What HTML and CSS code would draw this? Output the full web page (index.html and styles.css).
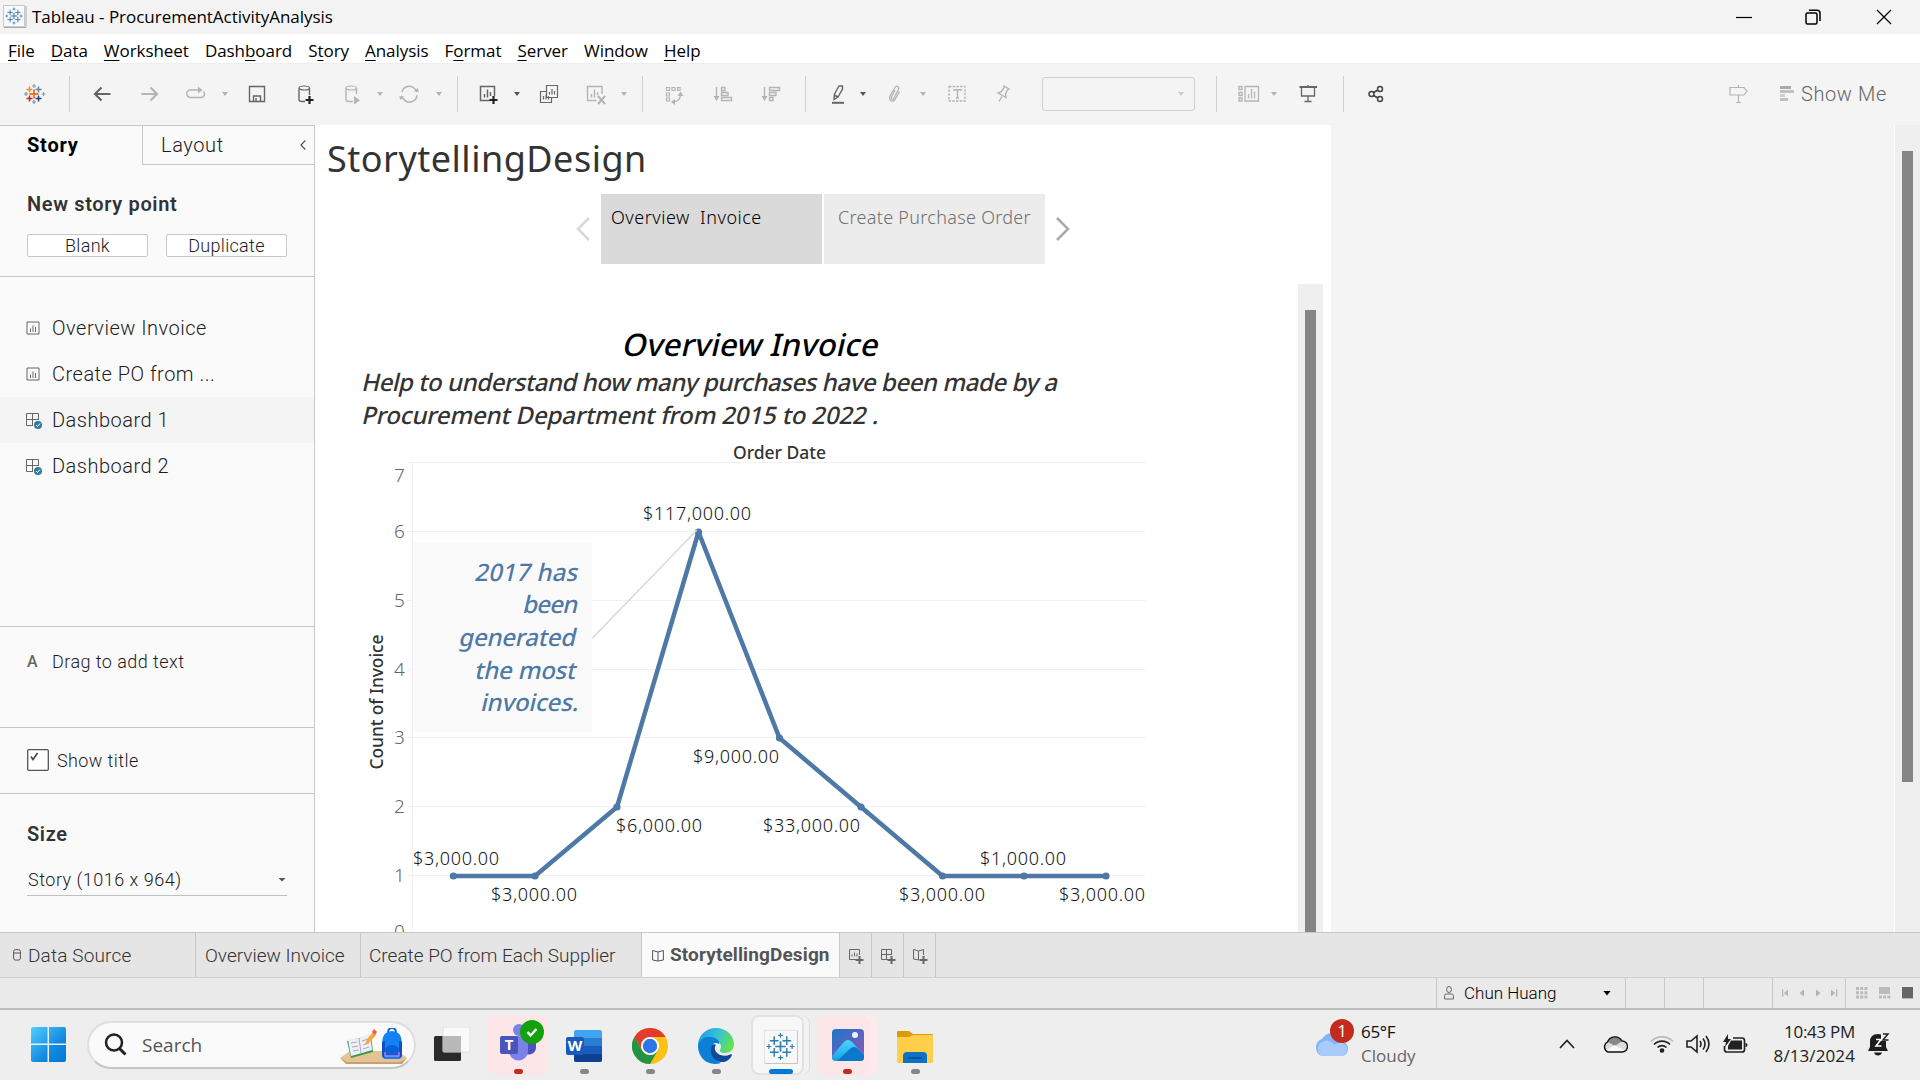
FILE: index.html
```html
<!DOCTYPE html>
<html lang="en">
<head>
<meta charset="utf-8">
<title>Tableau - ProcurementActivityAnalysis</title>
<link rel="stylesheet" href="styles.css">
</head>
<body>
<svg class="defs" width="0" height="0" aria-hidden="true">
  <symbol id="tableau" viewBox="0 0 30 30">
    <path d="M15 9.500v11M9.500 15h11" stroke-width="1.700"/>
    <path d="M8.500 4.500v9M4 9h9M21.500 4.500v9M17 9h9M8.500 16.500v9M4 21h9M21.500 16.500v9M17 21h9" stroke-width="1.500"/>
    <path d="M15 1v5M12.500 3.500h5M15 24v5M12.500 26.500h5M3 12.500v5M.5 15h5M27 12.500v5M24.500 15h5" stroke-width="1.200"/>
  </symbol>
  <symbol id="sheet" viewBox="0 0 14 14"><path d="M1 1h12v12H1zM4.500 7.500v3.500M7 4.500V11M9.500 6v5"/></symbol>
  <symbol id="dash" viewBox="0 0 18 18"><path d="M8 14.500H1.500v-12h12V9M1.500 8.500h12M7.500 2.500v12"/><circle cx="13" cy="14" r="4" fill="#2e7ba0" stroke="none"/><path d="M11 14l1.500 1.500 2.500-3" stroke="#fff"/></symbol>
</svg>

<header class="titlebar">
  <svg class="app-icon" width="24" height="24" viewBox="0 0 24 24"><rect x=".5" y=".5" width="21" height="21" fill="#f7f9fa" stroke="#c9c9c9"/><path d="M1 22.500h22V1" fill="none" stroke="#aaa"/><use href="#tableau" x="2" y="2" width="18" height="18" stroke="#2f7cab"/></svg>
  <span class="app-title">Tableau - ProcurementActivityAnalysis</span>
  <div class="win-controls">
    <svg width="16" height="16" viewBox="0 0 16 16"><path d="M0 8.500h16" stroke="#000" stroke-width="1.200"/></svg>
    <svg width="16" height="16" viewBox="0 0 16 16" fill="none" stroke="#000" stroke-width="1.500"><rect x="1" y="4" width="11" height="11" rx="1.500"/><path d="M4 1.200h8a3 3 0 0 1 3 3V12"/></svg>
    <svg width="16" height="16" viewBox="0 0 16 16" stroke="#000" stroke-width="1.300"><path d="M1 1l14 14M15 1L1 15"/></svg>
  </div>
</header>

<nav class="menubar">
  <span><u>F</u>ile</span><span><u>D</u>ata</span><span><u>W</u>orksheet</span><span>Dash<u>b</u>oard</span><span>S<u>t</u>ory</span><span><u>A</u>nalysis</span><span>F<u>o</u>rmat</span><span><u>S</u>erver</span><span>Wi<u>n</u>dow</span><span><u>H</u>elp</span>
</nav>

<div class="toolbar">
  <svg class="ic" viewBox="0 0 24 24"><g fill="none"><path d="M12 7.500v9M7.500 12h9" stroke="#e8762c" stroke-width="1.800"/><path d="M7.500 4.500v6M4.500 7.500h6" stroke="#eb912c" stroke-width="1.500"/><path d="M16.500 4.500v6M13.500 7.500h6" stroke="#5c8a9c" stroke-width="1.500"/><path d="M7.500 13.500v6M4.500 16.500h6" stroke="#c72035" stroke-width="1.500"/><path d="M16.500 13.500v6M13.500 16.500h6" stroke="#1f447e" stroke-width="1.500"/><path d="M12 2v4M10 4h4M19.500 12h4M21.500 10v4" stroke="#7aa6b8"/><path d="M12 18v4M10 20h4M2 12h4M4 10v4" stroke="#7199a6"/></g></svg>
  <i class="sep"></i>
  <svg class="ic dark bold" viewBox="0 0 24 24"><path d="M20.500 12H5M11.500 5.500L5 12l6.500 6.500"/></svg>
  <svg class="ic bold" viewBox="0 0 24 24"><path d="M3.500 12H19M12.500 5.500L19 12l-6.500 6.500"/></svg>
  <svg class="ic" viewBox="0 0 24 24"><path d="M15 8H6.500a3.500 3.500 0 0 0 0 7.500h10.500a3.500 3.500 0 0 0 2.500-6" stroke-width="1.500"/><path d="M14 4.500L18.500 8 14 11.500z" fill="currentColor" stroke="none"/></svg>
  <i class="caret"></i>
  <svg class="ic dark" viewBox="0 0 24 24"><path d="M4.500 4.500h15v15h-15zM8.500 19v-5h7v5M11 19v-3" stroke-width="1.400"/></svg>
  <svg class="ic dark" viewBox="0 0 24 24"><path d="M12 19.500H9c-2.500 0-3-1-3-2V6.500M16.500 6.500V13" stroke-width="1.400"/><ellipse cx="11.250" cy="6" rx="5.250" ry="2"/><path d="M16.500 14v8M12.500 18h8" stroke="#222" stroke-width="2.200"/></svg>
  <svg class="ic" viewBox="0 0 24 24"><path d="M13 19.500H9c-2.500 0-3-1-3-2V6.500M16.500 6.500V12" stroke-width="1.400"/><ellipse cx="11.250" cy="6" rx="5.250" ry="2"/><path d="M14 14l6 4.500-6 4z" fill="currentColor" stroke="none"/></svg>
  <i class="caret"></i>
  <svg class="ic" viewBox="0 0 24 24"><path d="M5 10a7.500 7.500 0 0 1 13-3l2 3M20 13a7.500 7.500 0 0 1-13.500 4L4 14" stroke-width="1.500"/><path d="M17 9.500h5L20.500 6zM2 14.500h5L3.500 18z" fill="currentColor" stroke="none"/></svg>
  <i class="caret"></i>
  <i class="sep"></i>
  <svg class="ic dark" viewBox="0 0 24 24"><path d="M14 18.500H4.500v-14h14V14M8.500 15.500V12M11.500 15.500v-8M14.500 14v-4" stroke-width="1.500"/><path d="M17.500 14v8M13.500 18h8" stroke="#222" stroke-width="2.200"/></svg>
  <i class="caret dark"></i>
  <svg class="ic dark" viewBox="0 0 24 24"><path d="M9.500 3.500h11v12h-11zM9 9.500H3.500v11h11V16M12.500 12.500V10M15 12.500V7M17.500 12.500V9M6.500 17.500V14M9 17.500V13M11.500 17.500V14" stroke-width="1.200"/></svg>
  <svg class="ic" viewBox="0 0 24 24"><path d="M12.500 18.500h-9v-14h14.500V12M7.500 15.500V12M10.500 15.500v-8M13.500 13v-3" stroke-width="1.400"/><path d="M14 14l7 8M21 14l-7 8" stroke-width="2"/></svg>
  <i class="caret"></i>
  <i class="sep"></i>
  <svg class="ic" viewBox="0 0 24 24"><path d="M4.500 5.500h3v3h-3zM10 5.500h3v3h-3zM15.500 5.500h2.500v3h-2.500zM4.500 11h3v3h-3zM4.500 16h3v3h-3zM18.500 12.500c0 4-2.500 7-7 7.500"/><path d="M15.500 14l3-4.500 3 4.500zM13 17l-4 3 4 3z" fill="currentColor" stroke="none"/></svg>
  <svg class="ic" viewBox="0 0 24 24"><path d="M5.500 5v10M10.500 5.500h3.500v3h-3.500zM10.500 10.500h6.500v3h-6.500zM10.500 15.500h10v3h-10z" stroke-width="1.400"/><path d="M2.500 14h6l-3 5z" fill="currentColor" stroke="none"/></svg>
  <svg class="ic" viewBox="0 0 24 24"><path d="M5.500 5v10M10.500 5.500h10v3h-10zM10.500 10.500h6.500v3h-6.500zM10.500 15.500h3.500v3h-3.500z" stroke-width="1.400"/><path d="M2.500 14h6l-3 5z" fill="currentColor" stroke="none"/></svg>
  <i class="sep"></i>
  <svg class="ic dark" viewBox="0 0 24 24"><path d="M8.500 12l4.500-8h3.500v3l-4.500 8-4 2.500zM8 13l4 2" stroke-width="1.400"/><path d="M6 20.800h12" stroke-width="2"/></svg>
  <i class="caret dark"></i>
  <svg class="ic" viewBox="0 0 24 24"><path d="M12 8l-3.500 7c-.8 2.500 1.500 3 2.500 1l4.500-8.500c1-3-2-4.500-3.500-2L7 14c-1.500 5 2.500 6.500 5 3.500l4.500-8" stroke-width="1.300"/></svg>
  <i class="caret"></i>
  <svg class="ic" viewBox="0 0 24 24"><path d="M4 4.500h16v14.500H4z" stroke-dasharray="2.500 1.200" stroke-width="1.300"/><path d="M9 9V7.800h7V9M12.500 8v8M11 16h3" stroke-width="1.400"/></svg>
  <svg class="ic" viewBox="0 0 24 24"><path d="M13 4l5 3-1.500 1-2 4 .5 3.500-8-4.500 3-1 3-4zM11 14.500L8 19.500" stroke-width="1.400"/></svg>
  <div class="combo"><i class="caret"></i></div>
  <i class="sep"></i>
  <svg class="ic" viewBox="0 0 24 24"><path d="M2 4.500h3v3H2zM2 10.500h3v3H2zM2 16h3v3H2zM8 4.500h13.500V19H8zM11.500 16.500V12M14.500 16.500V7M17.500 16.500V9.500" stroke-width="1.300"/></svg>
  <i class="caret"></i>
  <svg class="ic dark" viewBox="0 0 24 24"><path d="M3.500 5h17.500" stroke-width="2"/><path d="M5.500 6v8h13V6M12 14v5M8.500 19.500h7M12 3v2" stroke-width="1.300"/></svg>
  <i class="sep"></i>
  <svg class="ic share" viewBox="0 0 24 24"><circle cx="7.500" cy="12" r="2.500"/><circle cx="16" cy="7" r="2.500"/><circle cx="16" cy="17" r="2.500"/><path d="M9.500 10.500l4.500-2.500M9.500 13.500l4.500 2.500"/></svg>
  <svg class="ic" viewBox="0 0 24 24"><path d="M12.500 3v2M4 5.500h14l3 3.700-3 3.800H4zM12.500 13v8M10 20.500h5" stroke-width="1.200"/></svg>
  <div class="showme"><svg width="14" height="16" viewBox="0 0 14 16"><path d="M0 0h11v3H0z" fill="#aaa"/><path d="M0 4h14v3H0zM0 12h8v3H0z" fill="#c0c0c0"/><path d="M0 8h5v3H0z" fill="#d0d0d0"/></svg><span>Show Me</span></div>
</div>

<main class="workspace">
  <aside class="side">
    <div class="side-tabs">
      <div class="tab-on">Story</div>
      <div class="tab-off"><span>Layout</span><svg width="6" height="10" viewBox="0 0 6 10"><path d="M5.300.5L1 5l4.300 4.500" fill="none" stroke="#555" stroke-width="1.200"/></svg></div>
    </div>
    <section class="new-point">
      <h3>New story point</h3>
      <div class="btns"><button>Blank</button><button>Duplicate</button></div>
    </section>
    <ul class="sheets">
      <li><svg class="li-s" width="14" height="14"><use href="#sheet"/></svg><span>Overview Invoice</span></li>
      <li><svg class="li-s" width="14" height="14"><use href="#sheet"/></svg><span>Create PO from ...</span></li>
      <li class="hot"><svg width="18" height="18"><use href="#dash"/></svg><span>Dashboard 1</span></li>
      <li><svg width="18" height="18"><use href="#dash"/></svg><span>Dashboard 2</span></li>
    </ul>
    <section class="drag"><b>A</b><span>Drag to add text</span></section>
    <section class="show-title"><svg width="22" height="22" viewBox="0 0 22 22"><rect x=".7" y=".7" width="20.600" height="20.600" rx="1" fill="#fff" stroke="#555" stroke-width="1.300"/><path d="M4 7.500l2 3L10.500 4" fill="none" stroke="#444" stroke-width="1.600"/></svg><span>Show title</span></section>
    <section class="size"><h3>Size</h3><div class="select"><span>Story (1016 x 964)</span><i class="caret dark"></i></div></section>
  </aside>

  <div class="story">
    <h1>StorytellingDesign</h1>
    <div class="navigator">
      <svg width="16" height="26" viewBox="0 0 16 26"><path d="M14 2L3 13l11 11" fill="none" stroke="#d8d8d8" stroke-width="2.600"/></svg>
      <div class="point on"><span>Overview&nbsp; Invoice</span></div>
      <div class="point"><span>Create Purchase Order</span></div>
      <svg width="16" height="26" viewBox="0 0 16 26"><path d="M2 2l11 11L2 24" fill="none" stroke="#aaa" stroke-width="2.600"/></svg>
    </div>
    <div class="dashboard">
      <div class="dash-body">
        <svg class="chart" width="983" height="648" viewBox="315 284 983 648">
          <g class="heads">
            <text class="h" transform="translate(621 356) skewX(-13)" textLength="256">Overview Invoice</text>
            <text class="p" transform="translate(361 391) skewX(-13)" textLength="696">Help to understand how many purchases have been made by a</text>
            <text class="p" transform="translate(361 424) skewX(-13)" textLength="517">Procurement Department from 2015 to 2022 .</text>
          </g>
          <text class="axis-title" x="733" y="459" textLength="93">Order Date</text>
          <text class="axis-title" transform="translate(383 769.500) rotate(-90)" textLength="135">Count of Invoice</text>
          <g class="grid"><path d="M407 462.500H1146M407 531.500H1146M407 600.500H1146M407 669.500H1146M407 737.500H1146M407 806.500H1146M407 875.500H1146M412.500 462V932"/></g>
          <g class="ticks"><text x="394" y="482">7</text><text x="394" y="538">6</text><text x="394" y="607">5</text><text x="394" y="676">4</text><text x="394" y="744">3</text><text x="394" y="813">2</text><text x="394" y="882">1</text><text x="394" y="938">0</text></g>
          <rect x="413" y="542" width="179" height="190" fill="#fafafa"/>
          <polyline class="series" points="453.300,876 535,876 617,807 698.500,532 779.500,738 861,807 942.500,876 1024,876 1106,876"/>
          <g fill="#4e79a7"><circle cx="453.300" cy="876" r="3.600"/><circle cx="535" cy="876" r="3.600"/><circle cx="617" cy="807" r="3.600"/><circle cx="698.500" cy="532" r="3.600"/><circle cx="779.500" cy="738" r="3.600"/><circle cx="861" cy="807" r="3.600"/><circle cx="942.500" cy="876" r="3.600"/><circle cx="1024" cy="876" r="3.600"/><circle cx="1106" cy="876" r="3.600"/></g>
          <path d="M592.500 638L697 530" stroke="#d6d6d6" stroke-width="1.300"/>
          <g class="note"><text transform="translate(474 581) skewX(-13)" textLength="103">2017 has</text><text transform="translate(522 613) skewX(-13)" textLength="55">been</text><text transform="translate(458 646) skewX(-13)" textLength="117">generated</text><text transform="translate(474 679) skewX(-13)" textLength="101">the most</text><text transform="translate(480 711) skewX(-13)" textLength="98">invoices.</text></g>
          <g class="marks"><text x="643" y="520" textLength="108">$117,000.00</text><text x="693" y="763" textLength="86">$9,000.00</text><text x="616" y="832" textLength="86">$6,000.00</text><text x="763" y="832" textLength="97">$33,000.00</text><text x="413" y="865" textLength="86">$3,000.00</text><text x="491" y="901" textLength="86">$3,000.00</text><text x="899" y="901" textLength="86">$3,000.00</text><text x="980" y="865" textLength="86">$1,000.00</text><text x="1059" y="901" textLength="86">$3,000.00</text></g>
        </svg>
      </div>
      <div class="scroll inner"><i></i></div>
    </div>
  </div>
  <div class="empty"></div>
  <div class="scroll outer"><i></i></div>
</main>

<div class="sheet-tabs">
  <div class="st s1"><svg width="8" height="12" viewBox="0 0 8 12" fill="none" stroke="#555"><rect x=".6" y=".6" width="6.800" height="10.500" rx="2"/><path d="M.6 4h6.800"/></svg><span>Data Source</span></div>
  <div class="st s2"><span>Overview Invoice</span></div>
  <div class="st s3"><span>Create PO from Each Supplier</span></div>
  <div class="st s4"><svg width="12" height="13" viewBox="0 0 12 13" fill="none" stroke="#555"><path d="M.6 1.500L6 3l5.400-1.500V11L6 12 .6 11zM6 3v9"/></svg><span>StorytellingDesign</span></div>
  <div class="st add"><svg width="16" height="16" viewBox="0 0 16 16"><path d="M8 11.500H1.500v-10h10V7M4 8.500V6.500M6.500 8.500v-4M9 8.500v-3"/><path d="M11.500 8v8M7.500 12h8" stroke-width="2"/></svg></div>
  <div class="st add"><svg width="16" height="16" viewBox="0 0 16 16"><path d="M8 11.500H1.500v-10h10V7M1.500 6.500h10M6.500 1.500v10"/><path d="M11.500 8v8M7.500 12h8" stroke-width="2"/></svg></div>
  <div class="st add"><svg width="16" height="16" viewBox="0 0 16 16"><path d="M7 12l-5.500-1V1.500L6.500 3l5-1.500V7M6.500 3v9"/><path d="M11.500 8v8M7.500 12h8" stroke-width="2"/></svg></div>
</div>

<div class="status">
  <div class="cell user"><svg width="10" height="14" viewBox="0 0 10 14" fill="none" stroke="#666"><ellipse cx="5" cy="3.500" rx="2.400" ry="3"/><path d="M.6 13V9.500Q.6 8 2.500 8h5Q9.400 8 9.400 9.500V13z"/></svg><span>Chun Huang</span><i class="caret black"></i></div>
  <div class="cell c1"></div><div class="cell c2"></div><div class="cell c3"></div>
  <div class="cell pager"><svg width="56" height="8" viewBox="0 0 56 8"><path d="M0 .5h1.300v7H0zM6 .5v7L2 4zM22 .5v7L17.500 4zM34 .5v7L38.500 4zM49 .5v7L53 4zM54 .5h1.300v7H54z" fill="#b3b3b3"/></svg></div>
  <div class="cell views"><svg width="58" height="12" viewBox="0 0 58 12"><path d="M0 0h3v3H0zM4.200 0h3v3h-3zM8.400 0h3v3h-3zM0 4.200h3v3H0zM4.200 4.200h3v3h-3zM8.400 4.200h3v3h-3zM0 8.400h3v3H0zM4.200 8.400h3v3h-3zM8.400 8.400h3v3h-3zM23 0h11v7H23zM23 8.400h3v3h-3zM27.200 8.400h3v3h-3zM31.400 8.400h3v3h-3z" fill="#bbb"/><path d="M46 0h11v11.400H46z" fill="#666"/></svg></div>
</div>

<footer class="taskbar">
  <svg class="start" width="36" height="36" viewBox="0 0 36 36"><defs><linearGradient id="gw" gradientUnits="userSpaceOnUse" x1="0" y1="0" x2="35" y2="35"><stop offset="0" stop-color="#4fd0ff"/><stop offset=".6" stop-color="#138be0"/><stop offset="1" stop-color="#0078d4"/></linearGradient></defs><path d="M0 2q0-2 2-2h14.500v16.500H0zM18 0h15q2 0 2 2v14.500H18zM0 18h16.500v17H2q-2 0-2-2zM18 18h17v15q0 2-2 2H18z" fill="url(#gw)"/></svg>
  <div class="search">
    <svg width="23" height="23" viewBox="0 0 23 23" fill="none" stroke="#222" stroke-width="2.500"><circle cx="10" cy="9.500" r="8"/><path d="M15.500 15.500l6 6" stroke-width="3"/></svg>
    <span>Search</span>
    <svg class="art" width="68" height="38" viewBox="0 0 68 38"><path d="M0 30l10-7h48l9 7-7 5H7z" fill="#e5c394"/><path d="M0 30l7 4h53l7-4-5 6H6z" fill="#caa16e"/><path d="M7 13l24-6 2 17-22 6z" fill="#3c9c4e"/><path d="M8 12l11-2 11-5 2 17-10 3-11 3z" fill="#f0eff8"/><path d="M19 10l2 15M11 15l6-1M12 19l6-1M13 23l6-1M22 13l6-2M23 17l6-2M23 21l6-2" stroke="#a9a5c5" fill="none"/><path d="M25 17l2-6 6-7 3 3-6 7z" fill="#f6a93a"/><path d="M32 4l2-3 3 3-2 3z" fill="#ef5b4c"/><path d="M48 5q0-5 4-5t4 5" fill="none" stroke="#1565d8" stroke-width="2"/><path d="M42 14Q43 3 52 3t10 11v13q0 4-4 4H46q-4 0-4-4z" fill="#1381f3"/><path d="M42 14l3-1v17q-3-1-3-4zM62 14l-3-1v17q3-1 3-4z" fill="#0b52bd"/><path d="M45 22q1-5 7-5t7 5v6H45z" fill="#0d5fd8"/><path d="M45 24v4h14v-4" fill="none" stroke="#b07cf5" stroke-width="1.500"/></svg>
  </div>
  <svg class="taskview" width="36" height="36" viewBox="0 0 36 36"><rect y="9" width="27" height="25" rx="1.500" fill="#2a2a2a"/><rect x="9" width="27" height="25" rx="1" fill="#fafafa" stroke="#ddd"/><path d="M9 9h18v16H9z" fill="#b9b9b9"/></svg>

  <div class="app alert teams"><svg width="46" height="44" viewBox="0 0 46 44"><circle cx="30" cy="11" r="5" fill="#5059c9"/><path d="M24 15h13v13a7 7 0 0 1-13 3z" fill="#4b53bc"/><circle cx="20" cy="10" r="6" fill="#7b83eb"/><path d="M10 16h19v15a9.500 9.500 0 0 1-19 0z" fill="#7b83eb"/><rect x="1" y="16" width="18" height="18" rx="2" fill="#4b53bc"/><text x="10" y="30" text-anchor="middle" class="glyph">T</text><circle cx="33" cy="12" r="12" fill="#13a10e"/><path d="M28.500 12l3 3.500 6-6.500" fill="none" stroke="#fff" stroke-width="2.400"/></svg><i></i></div>
  <div class="app"><svg width="36" height="36" viewBox="0 0 36 36"><rect x="8" y="2" width="28" height="32" rx="2" fill="#41a5ee"/><path d="M8 10h28v8H8z" fill="#2b7cd3"/><path d="M8 18h28v8H8z" fill="#185abd"/><path d="M8 26h28v6q0 2-2 2H10q-2 0-2-2z" fill="#103f91"/><rect y="9" width="18" height="18" rx="2" fill="#185abd"/><text x="9" y="23" text-anchor="middle" class="glyph">W</text></svg><i></i></div>
  <div class="app"><svg width="36" height="36" viewBox="0 0 36 36"><circle cx="18" cy="18" r="18" fill="#fbc116"/><path d="M2.400 9A18 18 0 0 1 33.600 9H18a9 9 0 0 0-7.800 13.500z" fill="#e33b2e"/><path d="M2.400 9A18 18 0 0 0 18 36l7.800-13.500a9 9 0 0 1-15.600 0z" fill="#229342"/><circle cx="18" cy="18" r="9" fill="#fff"/><circle cx="18" cy="18" r="7.200" fill="#2b74ea"/></svg><i></i></div>
  <div class="app"><svg width="36" height="36" viewBox="0 0 36 36"><defs><linearGradient id="e1" x1="0" x2="1" y1=".2" y2=".5"><stop offset="0" stop-color="#1b9ede"/><stop offset=".5" stop-color="#35c1d8"/><stop offset="1" stop-color="#66e24b"/></linearGradient></defs><path d="M0 16C1 7 8 0 18 0c11 0 18 8 18 16 0 6-4 9-9 9-4 0-6-1.500-5-3 2-3 1-8-4-9-7-2-14 0-18 5z" fill="url(#e1)"/><path d="M0 18C2 10 10 7 17 10c4 2 5 5 4 6-5-3-9 2-7 8 2 6 7 10 9 11C10 39 0 30 0 18z" fill="#0b7fd6"/><path d="M14 17c-4 9 3 18 12 17 4-1 7-4 8-7 0-1-1-1-2-.5-6 3-14 0-15-5-.5-2 0-3 1-4.500-1-1-3-1-4 0z" fill="#10499a"/></svg><i></i></div>
  <div class="app active"><svg width="34" height="34" viewBox="0 0 34 34"><rect x=".5" y=".5" width="33" height="33" fill="#f8f8f8" stroke="#e4e4e4"/><path d="M1 33.500h32.500V1" fill="none" stroke="#c4c4c4"/><use href="#tableau" x="2" y="2" width="29" height="29" stroke="#2f7cab"/></svg><i></i></div>
  <div class="app alert stack"><svg width="32" height="32" viewBox="0 0 32 32"><defs><linearGradient id="p1" x2=".8" y2="1"><stop stop-color="#1877c9"/><stop offset="1" stop-color="#8d56b8"/></linearGradient><linearGradient id="p2" x2="0" y2="1"><stop stop-color="#4bd8fb"/><stop offset="1" stop-color="#1a9ce6"/></linearGradient></defs><rect width="32" height="32" rx="4" fill="url(#p1)"/><path d="M0 27L12 13q4-4 8 0l12 13v2q0 4-4 4H4q-4 0-4-4z" fill="url(#p2)"/><path d="M5 32L19 19q3-2 6 0l7 7v2q0 4-4 4z" fill="#0b78d0"/><circle cx="23" cy="6" r="3" fill="#eef3ff"/></svg><i></i></div>
  <div class="app"><svg width="36" height="34" viewBox="0 0 36 34"><path d="M0 8V2q0-1 1-1h11l4 3h19q1 0 1 1v3z" fill="#dc9a08"/><path d="M0 7h12l4-2h20v27q0 1-1 1H1q-1 0-1-1z" fill="#ffcf4a"/><path d="M6 33v-7q0-4 4-4h16q4 0 4 4v7z" fill="#0f71c5"/><path d="M11 28h14" stroke="#0a4c8c" stroke-width="1.500"/></svg><i></i></div>

  <div class="weather"><svg width="42" height="42" viewBox="0 0 42 42"><path d="M9 37a9 9 0 0 1 0-17 12 12 0 0 1 22 3 7.500 7.500 0 0 1-2 14z" fill="#86b4f5"/><path d="M9 37a8 8 0 0 1 0-14q7-4 12 3 5-4 10-1 5 3 2 9-2 3-6 3z" fill="#a9cbf9"/><circle cx="29" cy="12" r="12" fill="#c42b1c"/><text x="29" y="18" text-anchor="middle">1</text></svg>
    <div class="two"><span class="t1">65°F</span><span class="t2">Cloudy</span></div></div>
  <div class="tray">
    <svg width="16" height="10" viewBox="0 0 16 10"><path d="M1 9l7-7.500L15 9" fill="none" stroke="#222" stroke-width="1.700"/></svg>
    <svg width="26" height="18" viewBox="0 0 26 18"><path d="M6 17a5.500 5.500 0 0 1-.5-10A8 8 0 0 1 20 6a5.500 5.500 0 0 1 0 11z" fill="#dcdcdc"/><path d="M5.500 7A8 8 0 0 1 20 6l-7 5-7-4z" fill="#888"/><path d="M4 15l9-5 9 5-3 2H6z" fill="#f7f7f7"/><path d="M6 17a5.500 5.500 0 0 1-.5-10A8 8 0 0 1 20 6a5.500 5.500 0 0 1 0 11z" fill="none" stroke="#111" stroke-width="1.400"/></svg>
    <svg width="24" height="18" viewBox="0 0 24 18" fill="none" stroke="#222" stroke-width="1.700"><path d="M1 6.500a15.500 15.500 0 0 1 22 0" stroke="#bbb"/><path d="M4 9.500a11 11 0 0 1 16 0M7.500 12.500a6.500 6.500 0 0 1 9 0"/><circle cx="12" cy="15.500" r="1.500" fill="#222"/></svg>
    <svg width="25" height="20" viewBox="0 0 25 20" fill="none" stroke="#222" stroke-width="1.600"><path d="M1 7h4l6-5v16l-6-5H1zM14 7q2 3 0 6M17 4.500q4 5.500 0 11M20 2q6 8 0 16"/></svg>
    <svg width="25" height="20" viewBox="0 0 25 20"><path d="M10 4h9q2.500 0 2.500 2.500v9q0 2.500-2.500 2.500H4q-2.500 0-2.500-2.500V12" fill="none" stroke="#222" stroke-width="1.700"/><path d="M8 6.500h11v9H5V12zM22.500 9q2 0 2 2t-2 2zM5 0L0 8h3l-1 5 6-8H5z" fill="#222"/></svg>
  </div>
  <div class="clock"><span class="t3">10:43 PM</span><span class="t4">8/13/2024</span></div>
  <svg class="bell" width="22" height="24" viewBox="0 0 22 24"><path d="M2 10q0-8 8-8t8 8v5l2 4H0l2-4zM6 20.500h8q-1 3-4 3t-4-3z" fill="#1d1d1d"/><path d="M13 0h9v9h-9z" fill="#eee"/><path d="M15 2h5l-5 6h5.500" fill="none" stroke="#222" stroke-width="1.500"/><path d="M8 7.500h5L8 14h5.500" fill="none" stroke="#fff" stroke-width="1.500"/></svg>
</footer>
</body>
</html>
```
FILE: styles.css
```css
* { box-sizing: border-box; }
body { margin: 0; width: 1920px; height: 1080px; overflow: hidden; background: #f4f4f4; color: #333; font-family: Roboto, "Liberation Sans", sans-serif; display: flex; flex-direction: column; }
svg { display: block; flex: none; }
.defs { position: absolute; }
span { white-space: nowrap; }
h1, h3, ul { margin: 0; padding: 0; }

.titlebar { height: 34px; flex: none; background: #f3f3f3; display: flex; align-items: center; padding-left: 3px; font: 17px "Open Sans", sans-serif; color: #000; }
.app-title { margin: -1px 0 0 5px; letter-spacing: -.03px; }
.win-controls { margin-left: auto; display: flex; gap: 55px; padding-right: 28px; }
.win-controls svg:first-child { margin-right: -2px; }
#tableau path, .app-icon use { fill: none; }

.menubar { height: 30px; flex: none; background: #fff; border-bottom: 1px solid #eee; display: flex; gap: 16px; padding: 4px 0 0 8px; font: 17px/26px "Open Sans", sans-serif; color: #000; letter-spacing: -.05px; }
.menubar u { text-underline-offset: 3px; text-decoration-thickness: 1px; }

.toolbar { height: 61px; flex: none; padding: 0 0 1px 22px; display: grid; align-items: center; justify-items: start; grid-template-columns: 47px 21px 48px 46px 37px 24px 48px 47px 36px 21px 38px 22px 19px 37px 24px 47px 36px 22px 20px 49px 48px 46px 21px 33px 24px 36px 26px 46px 51px 174px 21px 33px 26px 47px 21px 362px 54px 118px; }
.ic { width: 24px; height: 24px; fill: none; stroke: currentColor; color: #b4b4b4; stroke-width: 1.2; }
.ic.dark { color: #666; }
.ic.bold { stroke-width: 2.2; }
.ic.share { color: #444; stroke-width: 1.5; }
.sep { width: 1px; height: 36px; background: #d0d0d0; }
.caret { width: 6px; height: 4px; margin-left: 1px; background: #b4b4b4; clip-path: polygon(0 0, 100% 0, 50% 100%); }
.caret.dark { background: #555; }
.caret.black { background: #000; width: 8px; height: 5px; }
.combo { width: 153px; height: 34px; border: 1px solid #d0d0d0; border-radius: 3px; display: flex; align-items: center; justify-content: flex-end; padding-right: 10px; }
.combo .caret { background: #ccc; }
.showme { display: flex; align-items: center; gap: 7px; font-size: 20px; font-weight: 300; color: #666; letter-spacing: .6px; }

.workspace { height: 807px; flex: none; display: flex; background: #f4f4f4; }
.side { width: 315px; background: #fafafa; border-right: 1px solid #c8c8c8; border-top: 1px solid #c8c8c8; flex: none; display: flex; flex-direction: column; font-weight: 300; color: #1c1c1c; }
.side-tabs { display: flex; height: 39px; font-size: 20px; line-height: 38px; }
.tab-on { width: 142px; padding-left: 27px; font-weight: 700; color: #000; letter-spacing: .8px; }
.tab-off { flex: 1; border-left: 1px solid #c8c8c8; border-bottom: 1px solid #c8c8c8; display: flex; align-items: center; justify-content: space-between; padding: 0 8px 0 18px; letter-spacing: .6px; }
.new-point { height: 112px; border-bottom: 1px solid #c8c8c8; padding: 27px 27px 0; }
.side h3 { font-size: 20px; line-height: 24px; font-weight: 600; letter-spacing: .65px; color: #333; }
.btns { display: flex; gap: 18px; margin-top: 18px; }
.btns button { flex: 1; height: 23px; border: 1px solid #c8c8c8; border-radius: 2px; background: #fff; font: 300 18px/20px Roboto, sans-serif; letter-spacing: .3px; color: #1c1c1c; padding: 0; }
.sheets { list-style: none; height: 350px; padding-top: 28px; border-bottom: 1px solid #c8c8c8; }
.sheets li { height: 46px; display: flex; align-items: center; padding-left: 25px; font-size: 20px; letter-spacing: .5px; }
.sheets li svg { fill: none; stroke: #666; margin-right: 9px; }
.sheets li .li-s { margin: 0 12px 0 1px; }
.sheets .hot { background: #f4f4f4; }
.drag { height: 101px; border-bottom: 1px solid #c8c8c8; display: flex; padding: 23px 0 0 27px; font-size: 18px; line-height: 24px; letter-spacing: .45px; }
.drag b { width: 25px; font-size: 16px; font-weight: 500; color: #666; }
.show-title { height: 66px; border-bottom: 1px solid #c8c8c8; display: flex; align-items: center; gap: 8px; padding: 0 0 1px 27px; font-size: 18px; letter-spacing: .4px; }
.size { padding: 28px 27px 0; }
.select { height: 30px; margin-top: 20px; border-bottom: 1px solid #c0c0c0; display: flex; align-items: center; justify-content: space-between; padding: 0 1px 2px; font-size: 18px; letter-spacing: .5px; }
.select .caret { width: 8px; }

.story { width: 1016px; flex: none; background: #fff; display: flex; flex-direction: column; }
.story h1 { height: 69px; padding: 8px 0 0 12px; font: 36px/52px "Noto Sans", sans-serif; letter-spacing: .5px; }
.navigator { height: 70px; display: flex; align-items: center; padding-left: 260px; gap: 10px; }
.point { width: 221px; height: 70px; background: #ececec; color: #707070; font: 300 18px/24px "Noto Sans", sans-serif; padding: 11px 0 0 14px; letter-spacing: .3px; }
.point.on { background: #dadada; color: #000; padding-left: 10px; margin-right: -8px; letter-spacing: .5px; }
.dashboard { margin-top: 20px; display: flex; padding-right: 8px; }
.chart text { font-family: "Noto Sans", sans-serif; fill: #333; }
.chart .h { font-size: 31px; font-weight: 500; fill: #000; }
.chart .p { font-size: 24px; font-weight: 500; }
.chart .axis-title { font-size: 17.5px; font-weight: 500; }
.chart .ticks text { font-size: 19px; font-weight: 300; fill: #666; }
.chart .marks text { font-size: 18px; font-weight: 300; fill: #111; }
.chart .note text { font-size: 24px; font-weight: 500; fill: #4e79a7; }
.grid { stroke: #f0f0f0; fill: none; }
.series { fill: none; stroke: #4e79a7; stroke-width: 4.5; stroke-linejoin: round; }
.scroll { width: 25px; flex: none; background: #efefef; padding: 26px 7px 0; }
.scroll i { display: block; width: 11px; height: 631px; background: #858585; }
.inner i { height: 622px; }
.empty { flex: 1; border-right: 1px solid #fff; }

.sheet-tabs { height: 46px; flex: none; background: #e5e5e5; border-top: 1px solid #c8c8c8; border-bottom: 1px solid #d0d0d0; display: flex; font-size: 19px; font-weight: 300; color: #333; }
.st { border-right: 1px solid #c8c8c8; display: flex; align-items: center; }
.s1 { width: 196px; padding-left: 13px; gap: 7px; letter-spacing: .15px; }
.s2 { width: 165px; padding-left: 9px; }
.s3 { width: 281px; padding-left: 8px; }
.s4 { width: 198px; padding-left: 10px; gap: 6px; background: #fafafa; font-weight: 700; color: #555; letter-spacing: .12px; }
.s4 span { margin-top: -2px; }
.add { width: 32px; justify-content: center; }
.add svg { fill: none; stroke: #666; margin-top: 2px; }

.status { height: 32px; flex: none; background: #eaeaea; border-bottom: 2px solid #bdbdbd; display: flex; padding-left: 1436px; }
.cell { border-left: 1px solid #c8c8c8; display: flex; align-items: center; flex: none; }
.user { width: 189px; padding-left: 7px; font-size: 17px; font-weight: 300; color: #000; }
.user span { width: 138px; margin-left: 10px; }
.c1 { width: 39px; }
.c2 { width: 39px; }
.c3 { width: 69px; }
.pager { width: 73px; padding-left: 9px; }
.views { width: 75px; padding-left: 10px; }

.taskbar { height: 70px; flex: none; background: #eee; display: flex; align-items: center; font-family: "Open Sans", sans-serif; padding-left: 31px; }
.start { margin-right: 20px; }
.search { width: 329px; height: 48px; border: 2px solid #dedede; border-bottom-color: #c6c6c6; border-radius: 24px; background: #fafafa; display: flex; align-items: center; padding: 0 6px 0 15px; font-size: 19px; color: #555; margin-top: -1px; }
.search span { margin-left: 15px; }
.art { margin-left: auto; margin-top: 4px; }
.taskview { margin: 0 18px 0 18px; }
.app { width: 60px; height: 60px; margin-right: 6px; flex: none; display: flex; flex-direction: column; align-items: center; justify-content: flex-end; border-radius: 8px; }
.app i { width: 9px; height: 5px; border-radius: 3px; background: #868686; margin-bottom: 1px; }
.app svg { margin-bottom: 5px; }
.alert { background: #fde6e8; }
.alert i { background: #c42b1c; }
.teams svg { margin: 0 0 5px 8px; }
.active { width: 53px; margin: 0 12px 0 -1px; padding-left: 6px; background: #f7f7f7; border: 2px solid #e2e2e2; box-shadow: 6px 0 0 -1px #f2f2f2, 7px 0 0 -1px #ddd; }
.active i { width: 24px; background: #0078d7; margin-bottom: -1px; }
.stack { width: 52px; margin: 0 16px 0 1px; border-radius: 8px; box-shadow: 8px 0 0 #fdeaec; padding-left: 9px; }
.stack svg { margin-bottom: 8px; }
.glyph { font: 700 15px "Open Sans", sans-serif; fill: #fff; }
.weather { margin-left: 362px; display: flex; gap: 6px; font-size: 17px; line-height: 24px; margin-top: -3px; }
.weather svg { margin-top: -1px; }
.weather text { font-size: 17px; fill: #fff; }
.two { display: flex; flex-direction: column; width: 60px; }
.t1 { color: #111; letter-spacing: -.3px; }
.t2 { color: #666; }
.tray { display: flex; align-items: center; margin-left: 138px; gap: 12px; padding-bottom: 3px; }
.tray svg:first-child { margin-right: 15px; }
.tray svg:nth-child(2) { margin-right: 10px; }
.clock { margin: -3px 0 0 auto; display: flex; flex-direction: column; align-items: flex-end; font-size: 17px; line-height: 24px; color: #222; }
.t3 { letter-spacing: -.3px; }
.t4 { letter-spacing: .1px; }
.bell { margin: -2px 30px 0 13px; }
```
